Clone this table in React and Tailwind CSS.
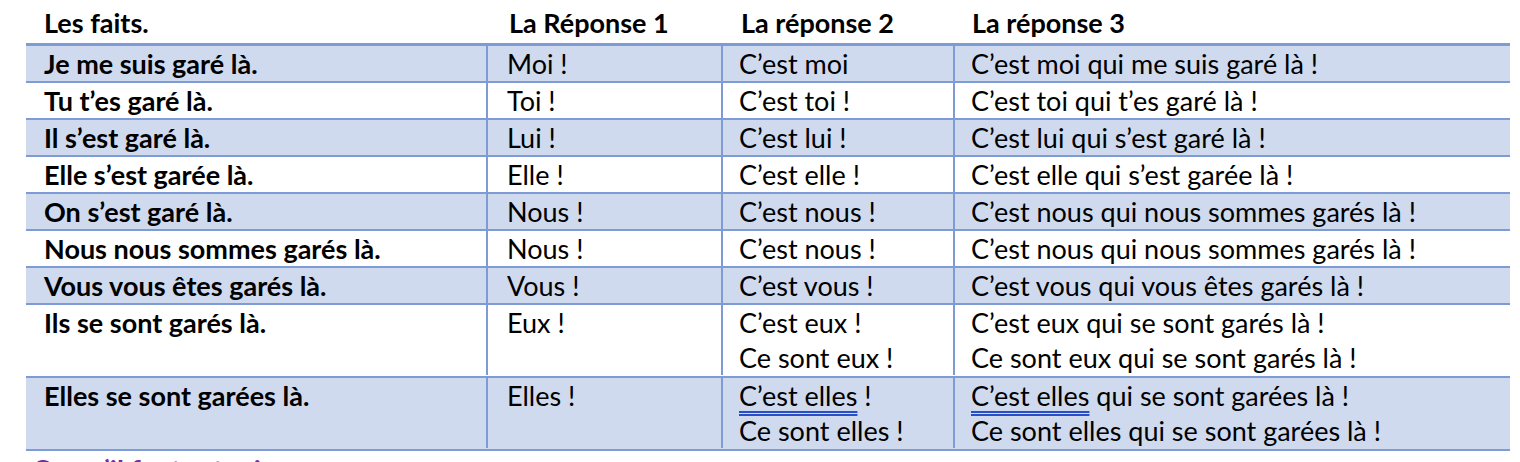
const rows = [
  { fait: 'Je me suis garé là.', r1: 'Moi !', r2: ['C’est moi'], r3: ['C’est moi qui me suis garé là !'], shade: true },
  { fait: 'Tu t’es garé là.', r1: 'Toi !', r2: ['C’est toi !'], r3: ['C’est toi qui t’es garé là !'] },
  { fait: 'Il s’est garé là.', r1: 'Lui !', r2: ['C’est lui !'], r3: ['C’est lui qui s’est garé là !'], shade: true },
  { fait: 'Elle s’est garée là.', r1: 'Elle !', r2: ['C’est elle !'], r3: ['C’est elle qui s’est garée là !'] },
  { fait: 'On s’est garé là.', r1: 'Nous !', r2: ['C’est nous !'], r3: ['C’est nous qui nous sommes garés là !'], shade: true },
  { fait: 'Nous nous sommes garés là.', r1: 'Nous !', r2: ['C’est nous !'], r3: ['C’est nous qui nous sommes garés là !'] },
  { fait: 'Vous vous êtes garés là.', r1: 'Vous !', r2: ['C’est vous !'], r3: ['C’est vous qui vous êtes garés là !'], shade: true },
  {
    fait: 'Ils se sont garés là.',
    r1: 'Eux !',
    r2: ['C’est eux !', 'Ce sont eux !'],
    r3: ['C’est eux qui se sont garés là !', 'Ce sont eux qui se sont garés là !'],
  },
  {
    fait: 'Elles se sont garées là.',
    r1: 'Elles !',
    r2: ['C’est elles !', 'Ce sont elles !'],
    r3: ['C’est elles qui se sont garées là !', 'Ce sont elles qui se sont garées là !'],
    shade: true,
    flagged: true,
  },
]

// Word flags "C'est elles" with its blue double underline
function Flagged({ text }) {
  if (!text.startsWith('C’est elles')) return text
  return (
    <>
      <span className="underline decoration-double decoration-[#2a4fc4] decoration-[1.5px] underline-offset-[5px]">
        C’est elles
      </span>
      {text.slice('C’est elles'.length)}
    </>
  )
}

function Lines({ items, flagged }) {
  return items.map((t, i) => (
    <div key={i} className="whitespace-nowrap">
      {flagged ? <Flagged text={t} /> : t}
    </div>
  ))
}

export default function App() {
  return (
    <div className="h-[462px] w-[1520px] overflow-hidden bg-white font-['Lato',sans-serif] text-[27px] leading-[35px] text-black">
      <div className="ml-[26px] w-[1484px]">
        <div className="flex h-[43px] items-end pb-[3px] font-bold">
          <div className="w-[462px] pl-[18px]">Les faits.</div>
          <div className="w-[235px] pl-[21px]">La Réponse 1</div>
          <div className="w-[232px] pl-[18px]">La réponse 2</div>
          <div className="flex-1 pl-[17px]">La réponse 3</div>
        </div>

        <div className="border-y-[3px] border-b-2 border-[#7f9bd6]">
          {rows.map((r, i) => (
            <div
              key={i}
              className={[
                'flex border-[#7f9bd6]',
                i < rows.length - 1 ? 'border-b-2' : '',
                r.r2.length > 1 ? 'pb-[1px]' : '',
                r.shade ? 'bg-[#cfdaef]' : 'bg-white',
              ].join(' ')}
            >
              <div className="w-[462px] whitespace-nowrap border-r-2 border-[#7f9bd6] pl-[18px] font-bold">{r.fait}</div>
              <div className="w-[235px] border-r-2 border-[#7f9bd6] pl-[19px]">{r.r1}</div>
              <div className="w-[232px] border-r-2 border-[#7f9bd6] pl-[16px]">
                <Lines items={r.r2} flagged={r.flagged} />
              </div>
              <div className="flex-1 pl-[16px]">
                <Lines items={r.r3} flagged={r.flagged} />
              </div>
            </div>
          ))}
        </div>

        <div className="pl-[6px] pt-[5px] text-[28px] font-bold leading-[28px] text-[#7030a0]">Ce qu’il faut retenir</div>
      </div>
    </div>
  )
}
